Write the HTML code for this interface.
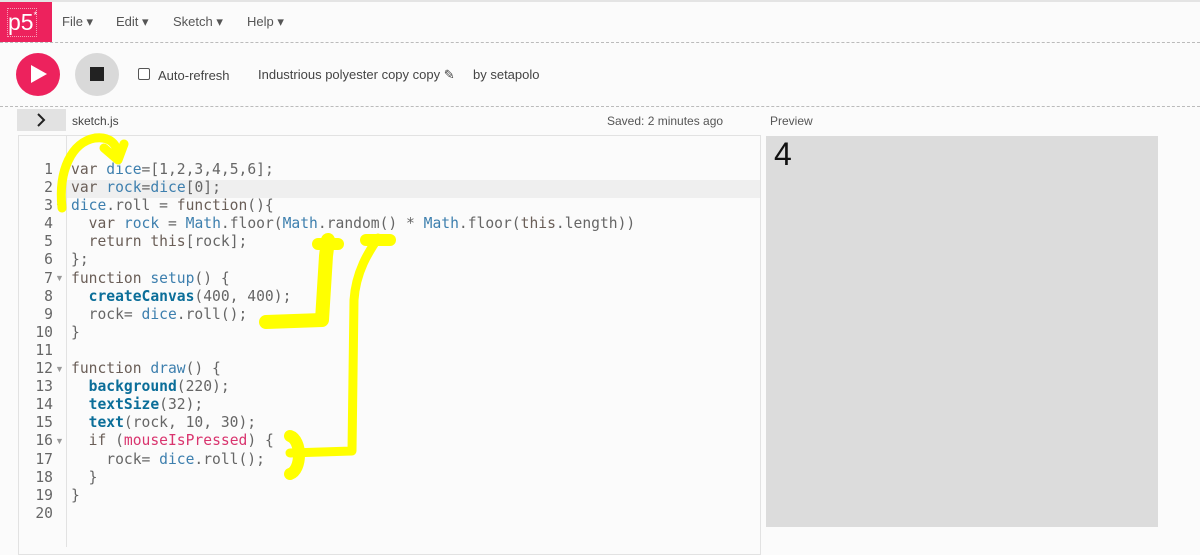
<!DOCTYPE html>
<html><head><meta charset="utf-8"><style>
*{margin:0;padding:0;box-sizing:border-box}
body{width:1200px;height:547px;background:#fbfbfb;font-family:"Liberation Sans",sans-serif;position:relative;overflow:hidden;color:#333}
.abs{position:absolute}
.nav{font-size:13px;color:#555;top:14px}
.code{font-family:"DejaVu Sans Mono",monospace;font-size:14.65px;line-height:18.1px;white-space:pre;color:#666}
.k{color:#6a5e57}.b{color:#3d7fae}.f{color:#0b6e99;font-weight:bold}.p{color:#d9346e}
.ln{font-family:"DejaVu Sans Mono",monospace;font-size:14.65px;line-height:18.1px;color:#666;text-align:right;width:36px;white-space:pre}
</style></head><body>
<div class="abs" style="top:0;left:0;width:1200px;height:2px;background:#e4e4e4"></div>
<div class="abs" style="left:0;top:2px;width:52px;height:40px;background:#ed225d"></div>
<div class="abs" style="left:7px;top:8px;width:30px;height:29px;border:1px dotted #f6a0b8"></div>
<div class="abs" style="left:8px;top:9px;color:#fff;font-size:23px">p5<sup style="font-size:9px;vertical-align:12px">*</sup></div>
<div class="abs nav" style="left:62px">File ▾</div>
<div class="abs nav" style="left:116px">Edit ▾</div>
<div class="abs nav" style="left:173px">Sketch ▾</div>
<div class="abs nav" style="left:247px">Help ▾</div>
<div class="abs" style="top:42px;left:0;width:1200px;border-top:1px dashed #bbb"></div>
<div class="abs" style="left:16px;top:53px;width:44px;height:43px;border-radius:50%;background:#ed225d"></div>
<svg class="abs" style="left:30px;top:64px" width="18" height="20"><path d="M1 1 L17 10 L1 19Z" fill="#fff"/></svg>
<div class="abs" style="left:75px;top:53px;width:44px;height:43px;border-radius:50%;background:#d9d9d9"></div>
<div class="abs" style="left:90px;top:67px;width:14px;height:14px;background:#222"></div>
<div class="abs" style="left:138px;top:68px;width:12px;height:12px;border:1px solid #555;border-radius:2px;background:#fff"></div>
<div class="abs" style="left:158px;top:68px;font-size:13px;color:#444">Auto-refresh</div>
<div class="abs" style="left:258px;top:67px;font-size:13px;color:#444">Industrious polyester copy copy ✎</div>
<div class="abs" style="left:473px;top:67px;font-size:13px;color:#444">by setapolo</div>
<div class="abs" style="top:106px;left:0;width:1200px;border-top:1px dashed #bbb"></div>
<div class="abs" style="left:17px;top:109px;width:49px;height:22px;background:#e2e2e2"></div>
<svg class="abs" style="left:35px;top:113px" width="12" height="14"><path d="M3 1 L9 7 L3 13" stroke="#222" stroke-width="2" fill="none"/></svg>
<div class="abs" style="left:72px;top:114px;font-size:12px;color:#444">sketch.js</div>
<div class="abs" style="left:607px;top:114px;font-size:12px;color:#555">Saved: 2 minutes ago</div>
<div class="abs" style="left:770px;top:114px;font-size:12px;color:#555">Preview</div>
<div class="abs" style="left:18px;top:135px;width:743px;height:420px;border:1px solid #e2e2e2;background:#fbfbfb"></div>
<div class="abs" style="left:66px;top:136px;width:1px;height:411px;background:#e2e2e2"></div>
<div class="abs" style="left:67px;top:180px;width:693px;height:18px;background:#efefef"></div>
<div class="abs ln" style="left:17px;top:161px">1
2
3
4
5
6
7
8
9
10
11
12
13
14
15
16
17
18
19
20</div>
<div class="abs" style="left:55px;top:201px;color:#999;font-size:9px">▼</div>
<div class="abs" style="left:55px;top:273px;color:#999;font-size:9px">▼</div>
<div class="abs" style="left:55px;top:364px;color:#999;font-size:9px">▼</div>
<div class="abs" style="left:55px;top:436px;color:#999;font-size:9px">▼</div>
<div class="abs code" style="left:71px;top:161px"><span class="k">var</span> <span class="b">dice</span>=[1,2,3,4,5,6];
<span class="k">var</span> <span class="b">rock</span>=<span class="b">dice</span>[0];
<span class="b">dice</span>.roll = <span class="k">function</span>(){
  <span class="k">var</span> <span class="b">rock</span> = <span class="b">Math</span>.floor(<span class="b">Math</span>.random() * <span class="b">Math</span>.floor(<span class="k">this</span>.length))
  <span class="k">return</span> <span class="k">this</span>[rock];
};
<span class="k">function</span> <span class="b">setup</span>() {
  <span class="f">createCanvas</span>(400, 400);
  rock= <span class="b">dice</span>.roll();
}

<span class="k">function</span> <span class="b">draw</span>() {
  <span class="f">background</span>(220);
  <span class="f">textSize</span>(32);
  <span class="f">text</span>(rock, 10, 30);
  <span class="k">if</span> (<span class="p">mouseIsPressed</span>) {
    rock= <span class="b">dice</span>.roll();
  }
}
</div>
<div class="abs" style="left:766px;top:136px;width:392px;height:391px;background:#dcdcdc"></div>
<div class="abs" style="left:774px;top:136px;font-size:32px;color:#111">4</div>
<svg class="abs" style="left:0;top:0" width="1200" height="547" fill="none" stroke="#ffff00" stroke-linecap="round" stroke-linejoin="round">
<path d="M62 208 C58 170 72 142 95 138 C110 136 118 145 117 155" stroke-width="9"/>
<path d="M104 148 L118 160 L124 144" stroke-width="9"/>
<path d="M266 322 L322 320 L326 256 L328 240" stroke-width="14"/>
<path d="M318 244 L338 244" stroke-width="12"/>
<path d="M290 453 L352 451 L354 300 C356 270 370 250 378 238" stroke-width="9"/>
<path d="M366 240 L390 240" stroke-width="12"/>
<path d="M290 436 C302 440 302 470 290 474" stroke-width="12"/>
</svg>
</body></html>
